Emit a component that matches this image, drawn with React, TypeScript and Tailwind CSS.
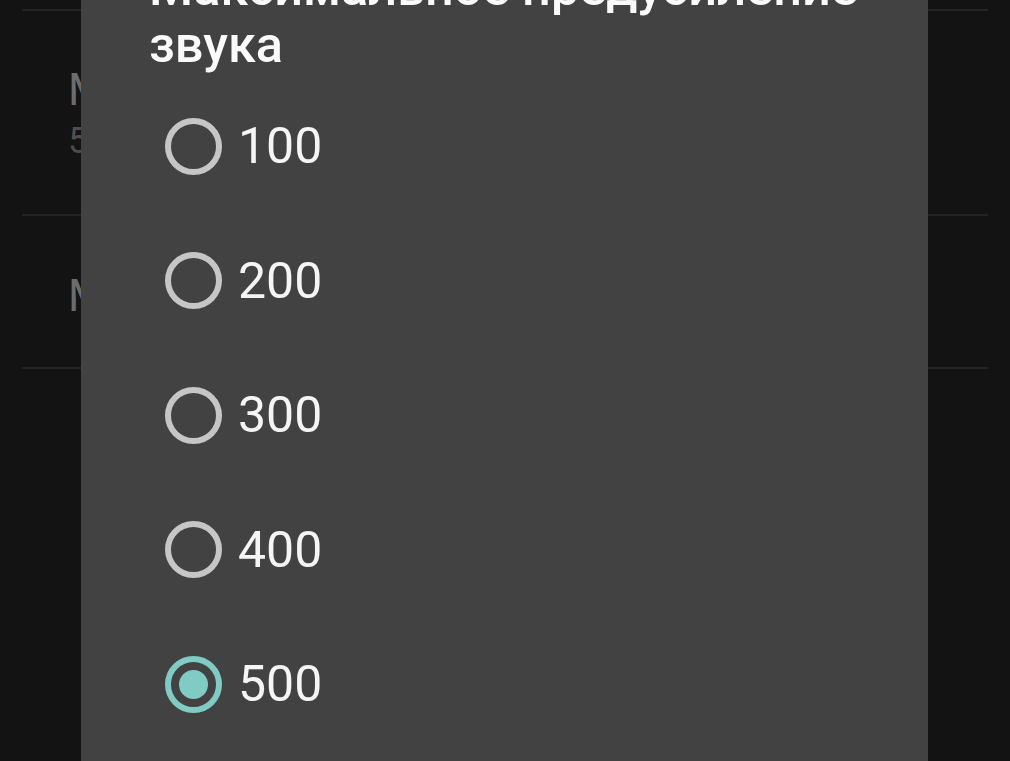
import React from "react";

const options = [100, 200, 300, 400, 500];

function Radio({ checked }: { checked: boolean }) {
  return (
    <span
      className={`flex h-[57px] w-[57px] shrink-0 items-center justify-center rounded-full border-[6px] ${
        checked ? "border-[#80cbc4]" : "border-[#c6c6c6]"
      }`}
    >
      {checked && <span className="h-[29px] w-[29px] rounded-full bg-[#80cbc4]" />}
    </span>
  );
}

export default function App() {
  return (
    <div
      className="relative h-[761px] w-[1010px] overflow-hidden bg-[#131313]"
      style={{ fontFamily: "Roboto, 'Noto Sans', sans-serif" }}
    >
      {/* settings list behind the dialog */}
      <div className="px-[22px] pt-[9px]">
        <div className="h-[2px] bg-[#242424]" />
        <div className="flex h-[203px] flex-col pl-[46px] pt-[53px]">
          <span className="text-[44px] leading-[52px] text-[#6c6c6c]">Максимальное предусиление звука</span>
          <span className="text-[36px] leading-[50px] text-[#4e4e4e]">500</span>
        </div>
        <div className="h-[2px] bg-[#242424]" />
        <div className="flex h-[151px] flex-col pl-[46px] pt-[54px]">
          <span className="text-[44px] leading-[52px] text-[#6c6c6c]">Метод усиления</span>
        </div>
        <div className="h-[2px] bg-[#242424]" />
      </div>

      {/* dialog */}
      <div className="absolute inset-y-0 left-[81px] w-[847px] bg-[#424242] pl-[68px]">
        <h2 className="mt-[-41px] text-[50.5px] font-medium leading-[57px] text-[#fafafa]">
          Максимальное предусиление звука
        </h2>
        <div className="mt-[6px] flex flex-col pl-[16px]">
          {options.map((v) => (
            <div key={v} className="flex h-[134.5px] items-center gap-[16px]">
              <Radio checked={v === 500} />
              <span className="text-[50px] leading-none text-[#f5f5f5]">{v}</span>
            </div>
          ))}
        </div>
      </div>
    </div>
  );
}
